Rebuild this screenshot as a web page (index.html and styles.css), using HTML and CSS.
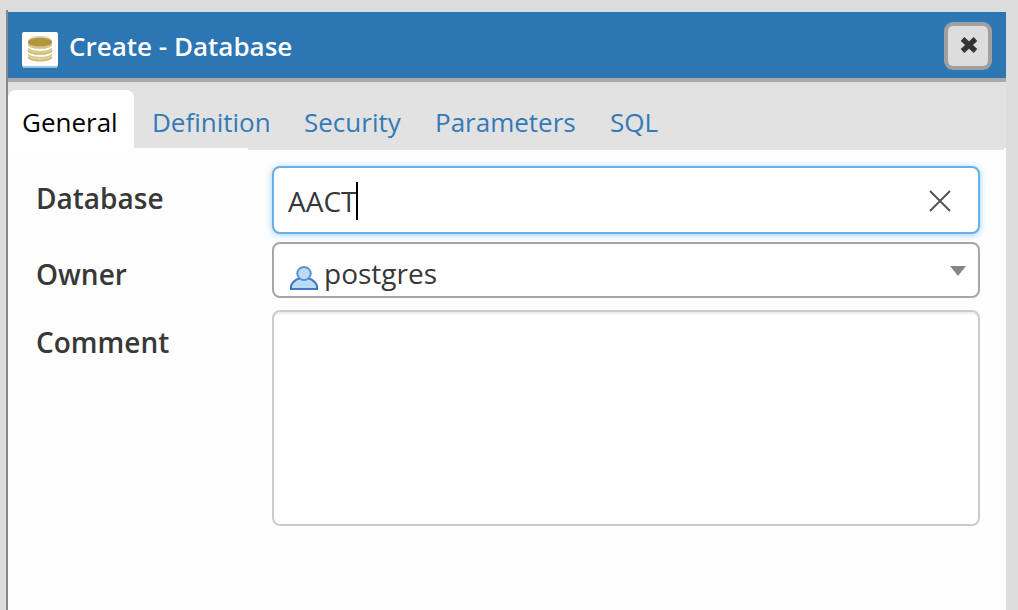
FILE: index.html
```html
<!DOCTYPE html>
<html lang="en">
<head>
<meta charset="utf-8">
<title>Create - Database</title>
<link rel="stylesheet" href="styles.css">
</head>
<body>
<main class="dialog">
  <header class="titlebar">
    <svg class="db-icon" viewBox="0 0 36 36" width="36" height="36" aria-hidden="true">
      <rect width="36" height="35" rx="2" fill="#fff"/>
      <rect x="1" y="34" width="34" height="2" fill="#9ec2e0"/>
      <path d="M6 9v16c0 6 24 6 24 0V9z" fill="#d5c384"/>
      <path d="M6 13.500c3 4.500 21 4.500 24 0v2c-3 4.500-21 4.500-24 0zM6 19.500c3 4.500 21 4.500 24 0v2c-3 4.500-21 4.500-24 0z" fill="#fff"/>
      <path d="M6 17c3 4.500 21 4.500 24 0v2.500c-3 4.500-21 4.500-24 0zM6 23c3 4.500 21 4.500 24 0v3c-3 4.500-21 4.500-24 0z" fill="#e8dda9"/>
      <path d="M6 18.500c3 4.500 21 4.500 24 0M6 25c3 4.500 21 4.500 24 0" fill="none" stroke="#cdb974" stroke-width="1.4"/>
      <ellipse cx="18" cy="9" rx="12" ry="5" fill="#e0d3ad"/>
      <ellipse cx="18" cy="10" rx="12" ry="4.300" fill="#b2943a"/>
    </svg>
    <h1 class="title">Create - Database</h1>
    <button class="close" aria-label="Close">
      <svg viewBox="0 0 18 16" width="18" height="16"><path d="M2.500 2 15.500 14M15.500 2 2.500 14" stroke="#333" stroke-width="5.200"/></svg>
    </button>
  </header>
  <nav class="tabs">
    <a class="tab active">General</a>
    <a class="tab definition">Definition</a>
    <a class="tab security">Security</a>
    <a class="tab parameters">Parameters</a>
    <a class="tab sql">SQL</a>
  </nav>
  <section class="form">
    <div class="row row-database">
      <span class="label">Database</span>
      <div class="field input">
        <span class="value">AACT</span><i class="caret"></i>
        <svg class="clear" viewBox="0 0 22 22" width="22" height="22"><path d="M1 1 21 21M21 1 1 21" stroke="#555" stroke-width="2"/></svg>
      </div>
    </div>
    <div class="row row-owner">
      <span class="label">Owner</span>
      <div class="field select">
        <svg class="user" viewBox="0 0 28 24" width="28" height="24">
          <path d="M1 23v-3c1-4 4-6 8-7.500h10c4 1.500 7 3.500 8 7.500v3z" fill="#b9dcf2" stroke="#4377c4" stroke-width="2"/>
          <ellipse cx="14" cy="7.500" rx="6.700" ry="6.500" fill="#b9dcf2" stroke="#5b90d5" stroke-width="2"/>
        </svg>
        <span class="owner">postgres</span>
        <svg class="arrow" viewBox="0 0 16 10" width="16" height="10"><path d="M0 0h16L8 10z" fill="#858585"/></svg>
      </div>
    </div>
    <div class="row row-comment">
      <span class="label">Comment</span>
      <div class="field textarea"></div>
    </div>
  </section>
</main>
</body>
</html>
```
FILE: styles.css
```css
* { box-sizing: border-box; }
body {
  margin: 0;
  height: 610px;
  padding: 10px 12px 0 6px;
  overflow: hidden;
  background: #ddd;
  color: #383838;
  font-family: "Open Sans", sans-serif;
  font-size: 26px;
}
.dialog {
  height: 600px;
  padding-top: 2px;
  border-left: 2px solid #888;
  display: flex;
  flex-direction: column;
}
.titlebar {
  height: 70px;
  flex: none;
  display: flex;
  padding: 0 14px;
  background: #2c76b4;
  border-bottom: 4px solid #a9a9a9;
}
.db-icon { margin-top: 20px; flex: none; }
.title {
  margin: 16px 0 0 11px;
  font-size: 26px;
  line-height: 36px;
  font-weight: 600;
  color: #fff;
  white-space: nowrap;
}
.close {
  width: 48px;
  height: 48px;
  margin: 10px 0 0 auto;
  padding: 0 0 3px 1px;
  display: flex;
  align-items: center;
  justify-content: center;
  background: #ddd;
  border: 4px solid #a0a0a0;
  border-radius: 9px;
}
.tabs {
  height: 68px;
  flex: none;
  display: flex;
  padding-top: 8px;
  background:
    linear-gradient(#fff, #fff) 0 66px / 240px 2px no-repeat,
    linear-gradient(#fff, #fff) 100% 66px / 2px 2px no-repeat,
    #e2e2e2;
}
.tab {
  padding-top: 14px;
  line-height: 36px;
  color: #337ab7;
  white-space: nowrap;
}
.tab.active {
  width: 126px;
  padding-left: 14px;
  background: #fff;
  border-radius: 8px 8px 0 0;
  color: #000;
}
.definition { width: 152px; margin-left: 18px; }
.security { width: 131px; }
.parameters { width: 175px; }
.form {
  flex: 1;
  padding: 16px 26px 0 28px;
  background: #fefefe;
}
.row { display: flex; }
.row-database { height: 76px; }
.row-owner { height: 68px; }
.label {
  width: 236px;
  flex: none;
  padding-top: 14px;
  line-height: 36px;
  font-weight: 600;
  font-size: 28px;
}
.field {
  flex: 1;
  display: flex;
  background: #fff;
  border: 2px solid #ccc;
  border-radius: 8px;
  font-size: 28px;
}
.input {
  height: 68px;
  padding: 2px 27px 0 14px;
  align-items: center;
  border-color: #66afe9;
  box-shadow: 0 1px 7px rgba(102, 175, 233, .6);
}
.value { line-height: 36px; }
.caret { width: 2px; height: 38px; background: #000; }
.clear { margin-left: auto; }
.select {
  height: 56px;
  padding: 0 12px 0 16px;
  border-color: #a6a6a6;
}
.user { margin-top: 22px; flex: none; }
.owner { margin: 11px 0 0 6px; line-height: 36px; }
.arrow { margin: 22px 0 0 auto; }
.textarea { height: 216px; box-shadow: inset 0 2px 1px #eee; }
```
